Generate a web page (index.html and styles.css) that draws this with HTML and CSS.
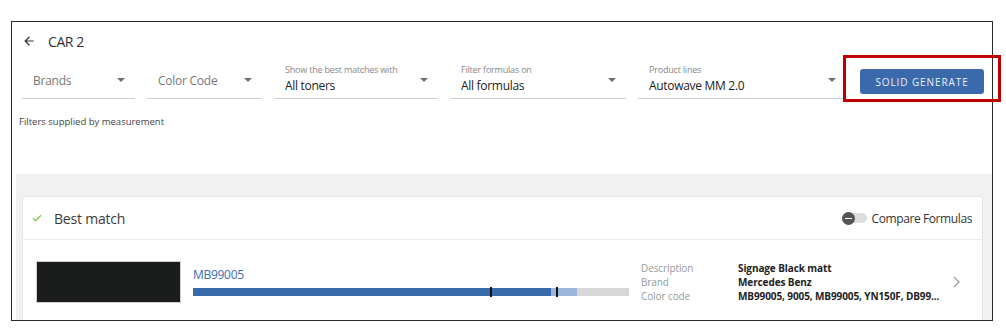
FILE: index.html
```html
<!DOCTYPE html>
<html lang="en">
<head>
  <meta charset="UTF-8" />
  <meta name="viewport" content="width=device-width, initial-scale=1.0"/>
  <title>CAR 2 - Matches</title>
  <link rel="stylesheet" href="styles.css">
</head>
<body>
  <div class="frame">
    <div class="top">
      <div class="title-row">
        <svg class="back" viewBox="0 0 24 24" width="14" height="14"><path d="M20 11H7.83l5.59-5.59L12 4l-8 8 8 8 1.41-1.41L7.83 13H20v-2z" fill="#333"/></svg>
        <span class="title">CAR 2</span>
      </div>

      <div class="filters">
        <div class="field w-brands">
          <span class="placeholder">Brands</span>
          <span class="caret"></span>
        </div>
        <div class="field w-code">
          <span class="placeholder">Color Code</span>
          <span class="caret"></span>
        </div>
        <div class="field w-toners">
          <div class="field-text">
            <span class="label">Show the best matches with</span>
            <span class="value">All toners</span>
          </div>
          <span class="caret"></span>
        </div>
        <div class="field w-formulas">
          <div class="field-text">
            <span class="label">Filter formulas on</span>
            <span class="value">All formulas</span>
          </div>
          <span class="caret"></span>
        </div>
        <div class="field w-lines">
          <div class="field-text">
            <span class="label">Product lines</span>
            <span class="value">Autowave MM 2.0</span>
          </div>
          <span class="caret"></span>
        </div>
        <button class="generate">SOLID GENERATE</button>
      </div>

      <div class="note">Filters supplied by measurement</div>
    </div>

    <div class="results">
      <div class="card">
        <div class="card-head">
          <svg class="check" viewBox="0 0 10 8" width="10" height="8"><path d="M1 4.2l2.6 2.6L9 1.2" fill="none" stroke="#8bc34a" stroke-width="1.3"/></svg>
          <span class="head-title">Best match</span>
          <div class="compare">
            <span class="toggle"><span class="knob"></span></span>
            <span>Compare Formulas</span>
          </div>
        </div>

        <div class="match-row">
          <div class="swatch"></div>
          <div class="match-main">
            <a class="code-link">MB99005</a>
            <div class="bar">
              <span class="seg seg-dark" style="width: 82.1%"></span>
              <span class="seg seg-light" style="width: 6%"></span>
              <span class="tick" style="left: 68.1%"></span>
              <span class="tick" style="left: 83.3%"></span>
            </div>
          </div>
          <div class="details">
            <span class="d-label">Description</span><span class="d-value">Signage Black matt</span>
            <span class="d-label">Brand</span><span class="d-value">Mercedes Benz</span>
            <span class="d-label">Color code</span><span class="d-value">MB99005, 9005, MB99005, YN150F, DB99...</span>
          </div>
          <svg class="chevron" viewBox="0 0 7 12" width="7" height="12"><path d="M1 1l5 5-5 5" fill="none" stroke="#9a9a9a" stroke-width="1.2"/></svg>
        </div>
      </div>
    </div>
  </div>

  <div class="highlight"></div>
</body>
</html>
```

FILE: styles.css
```css
* {
  box-sizing: border-box;
}
body {
  font-family: 'Open Sans', 'Noto Sans', sans-serif;
  margin: 0;
  background: #fff;
  color: #333;
  position: relative;
}
.frame {
  margin: 21px 0 0 11px;
  width: 982px;
  height: 300px;
  border: 1px solid #2a2a2a;
  overflow: hidden;
  background: #fff;
}
.top {
  height: 152px;
}
.title-row {
  display: flex;
  align-items: center;
  height: 29px;
  padding: 9px 0 0 10px;
}
.back {
  margin-right: 12px;
}
.title {
  font-size: 14px;
  letter-spacing: -0.4px;
  color: #333;
}
.filters {
  display: flex;
  align-items: flex-start;
  gap: 12px;
  margin-top: 11px;
  padding-left: 10px;
}
.field {
  display: flex;
  align-items: center;
  height: 37px;
  padding: 0 10px 0 11px;
  border-bottom: 1px solid #cfcfcf;
}
.w-brands { width: 113px; }
.w-code { width: 115px; }
.w-toners { width: 164px; }
.w-formulas { width: 176px; }
.w-lines { width: 208px; }
.field .placeholder {
  flex: 1;
  font-size: 12px;
  letter-spacing: -0.25px;
  color: #777;
}
.field-text {
  flex: 1;
  display: flex;
  flex-direction: column;
}
.label {
  font-size: 9px;
  line-height: 12px;
  letter-spacing: -0.2px;
  color: #888;
}
.value {
  font-size: 12px;
  line-height: 20px;
  letter-spacing: -0.3px;
  color: #222;
}
.caret {
  width: 8px;
  height: 4px;
  border-left: 4px solid transparent;
  border-right: 4px solid transparent;
  border-top: 4px solid #6f6f6f;
}
.generate {
  margin-top: 7px;
  margin-left: 2px;
  width: 124px;
  height: 25px;
  border: none;
  border-radius: 3px;
  background: #3a6aac;
  color: #e9eef6;
  font-family: 'Open Sans', sans-serif;
  font-size: 10px;
  font-weight: 400;
  letter-spacing: 0.9px;
  padding: 0;
}
.note {
  margin: 16px 0 0 7px;
  font-size: 9.5px;
  line-height: 14px;
  color: #444;
}
.results {
  margin-left: 4px;
  height: 148px;
  background: #f1f1f1;
  padding: 22px 9px 0 6px;
}
.card {
  background: #fff;
  border: 1px solid #e6e6e6;
  border-radius: 3px;
  height: 200px;
}
.card-head {
  display: flex;
  align-items: center;
  height: 43px;
  padding: 0 10px 0 9px;
  border-bottom: 1px solid #ebebeb;
}
.check {
  margin-right: 12px;
}
.head-title {
  font-size: 14px;
  letter-spacing: -0.2px;
  color: #3a3a3a;
}
.compare {
  margin-left: auto;
  display: flex;
  align-items: center;
  gap: 5px;
  font-size: 12px;
  letter-spacing: -0.4px;
  color: #333;
}
.toggle {
  display: flex;
  align-items: center;
  width: 25px;
  height: 10px;
  border-radius: 5px;
  background: #dedede;
}
.knob {
  width: 13px;
  height: 13px;
  border-radius: 50%;
  background: #555;
  position: relative;
}
.knob::after {
  content: "";
  position: absolute;
  left: 3px;
  top: 6px;
  width: 7px;
  height: 1.5px;
  background: #fff;
}
.match-row {
  display: flex;
  align-items: flex-start;
  padding: 21px 22px 0 13px;
}
.swatch {
  width: 145px;
  height: 42px;
  background: #1b1c1c;
  border: 1px solid #cfcfcf;
}
.match-main {
  width: 436px;
  margin: 5px 0 0 12px;
}
.code-link {
  display: block;
  font-size: 12px;
  line-height: 18px;
  letter-spacing: -0.3px;
  color: #3d6cb0;
}
.bar {
  position: relative;
  display: flex;
  height: 8px;
  margin-top: 4px;
  background: #d7d7d7;
}
.seg-dark { background: #3a6aa9; }
.seg-light { background: #9db7da; }
.tick {
  position: absolute;
  top: -1px;
  width: 2px;
  height: 10px;
  background: #111;
}
.details {
  display: grid;
  grid-template-columns: 97px auto;
  margin-left: 12px;
  font-size: 10px;
  line-height: 14px;
}
.d-label {
  color: #9a9a9a;
  letter-spacing: -0.1px;
}
.d-value {
  font-weight: 700;
  color: #222;
  letter-spacing: -0.1px;
}
.chevron {
  margin: 15px 0 0 auto;
}
.highlight {
  position: absolute;
  left: 843px;
  top: 55px;
  width: 158px;
  height: 47px;
  border: 3px solid #c00000;
}
```
